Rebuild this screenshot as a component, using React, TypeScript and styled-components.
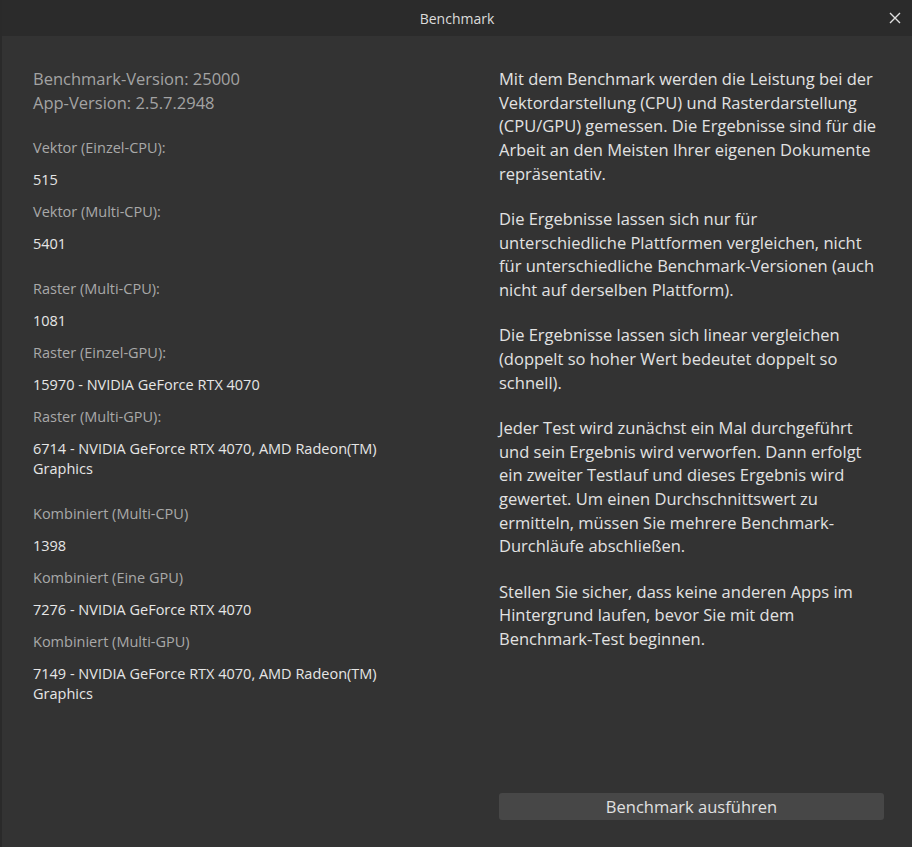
import React from 'react';
import styled, { createGlobalStyle } from 'styled-components';

const GlobalStyle = createGlobalStyle`
  html, body {
    margin: 0;
    padding: 0;
    background: #333333;
  }
  * {
    box-sizing: border-box;
  }
`;

const Window = styled.div`
  width: 912px;
  height: 847px;
  display: flex;
  flex-direction: column;
  background: #333333;
  border-left: 2px solid #2a2a2a;
  font-family: 'Open Sans', 'Noto Sans', sans-serif;
  color: #e2e2e2;
  overflow: hidden;
`;

const TitleBar = styled.div`
  height: 36px;
  flex: none;
  display: flex;
  align-items: center;
  justify-content: center;
  position: relative;
  background: #2b2b2b;
  font-size: 14px;
  color: #dcdcdc;
`;

const CloseButton = styled.button`
  position: absolute;
  right: 8px;
  top: 9px;
  width: 18px;
  height: 18px;
  padding: 0;
  border: none;
  background: transparent;
  display: flex;
  align-items: center;
  justify-content: center;
  cursor: pointer;
`;

const Body = styled.div`
  flex: 1;
  display: flex;
  padding: 31px 28px 27px 31px;
`;

const LeftColumn = styled.div`
  width: 380px;
  flex: none;
  display: flex;
  flex-direction: column;
`;

const RightColumn = styled.div`
  flex: 1;
  margin-left: 86px;
  display: flex;
  flex-direction: column;
`;

const VersionBlock = styled.div`
  font-size: 16.5px;
  line-height: 23.5px;
  color: #a3a3a3;
  margin-bottom: 24px;
`;

const Group = styled.div<{ $last?: boolean }>`
  display: flex;
  flex-direction: column;
  gap: 12px;
  margin-bottom: ${(p) => (p.$last ? 0 : 25)}px;
`;

const Label = styled.div`
  font-size: 14.5px;
  line-height: 20px;
  color: #a9a9a9;
`;

const Value = styled.div`
  font-size: 14.5px;
  line-height: 20px;
  color: #e6e6e6;
`;

const Paragraph = styled.p`
  margin: 0 0 21.5px 0;
  font-size: 16.5px;
  line-height: 23.7px;
  color: #e2e2e2;
`;

const RunButton = styled.button`
  margin-top: auto;
  height: 27px;
  width: 100%;
  border: none;
  border-radius: 3px;
  background: #474747;
  color: #e0e0e0;
  font-family: inherit;
  font-size: 16.5px;
  cursor: pointer;
`;

type Result = { label: string; value: string };

const groups: Result[][] = [
  [
    { label: 'Vektor (Einzel-CPU):', value: '515' },
    { label: 'Vektor (Multi-CPU):', value: '5401' },
  ],
  [
    { label: 'Raster (Multi-CPU):', value: '1081' },
    { label: 'Raster (Einzel-GPU):', value: '15970 - NVIDIA GeForce RTX 4070' },
    { label: 'Raster (Multi-GPU):', value: '6714 - NVIDIA GeForce RTX 4070, AMD Radeon(TM) Graphics' },
  ],
  [
    { label: 'Kombiniert (Multi-CPU)', value: '1398' },
    { label: 'Kombiniert (Eine GPU)', value: '7276 - NVIDIA GeForce RTX 4070' },
    { label: 'Kombiniert (Multi-GPU)', value: '7149 - NVIDIA GeForce RTX 4070, AMD Radeon(TM) Graphics' },
  ],
];

const paragraphs = [
  'Mit dem Benchmark werden die Leistung bei der Vektordarstellung (CPU) und Rasterdarstellung (CPU/GPU) gemessen. Die Ergebnisse sind für die Arbeit an den Meisten Ihrer eigenen Dokumente repräsentativ.',
  'Die Ergebnisse lassen sich nur für unterschiedliche Plattformen vergleichen, nicht für unterschiedliche Benchmark-Versionen (auch nicht auf derselben Plattform).',
  'Die Ergebnisse lassen sich linear vergleichen (doppelt so hoher Wert bedeutet doppelt so schnell).',
  'Jeder Test wird zunächst ein Mal durchgeführt und sein Ergebnis wird verworfen. Dann erfolgt ein zweiter Testlauf und dieses Ergebnis wird gewertet. Um einen Durchschnittswert zu ermitteln, müssen Sie mehrere Benchmark-Durchläufe abschließen.',
  'Stellen Sie sicher, dass keine anderen Apps im Hintergrund laufen, bevor Sie mit dem Benchmark-Test beginnen.',
];

export default function App() {
  return (
    <>
      <GlobalStyle />
      <Window>
        <TitleBar>
          Benchmark
          <CloseButton aria-label="Schließen">
            <svg width="12" height="12" viewBox="0 0 12 12">
              <path d="M1 1 L11 11 M11 1 L1 11" stroke="#e0e0e0" strokeWidth="1.4" fill="none" />
            </svg>
          </CloseButton>
        </TitleBar>
        <Body>
          <LeftColumn>
            <VersionBlock>
              <div>Benchmark-Version: 25000</div>
              <div>App-Version: 2.5.7.2948</div>
            </VersionBlock>
            {groups.map((g, gi) => (
              <Group key={gi} $last={gi === groups.length - 1}>
                {g.map((r) => (
                  <React.Fragment key={r.label}>
                    <Label>{r.label}</Label>
                    <Value>{r.value}</Value>
                  </React.Fragment>
                ))}
              </Group>
            ))}
          </LeftColumn>
          <RightColumn>
            {paragraphs.map((t, i) => (
              <Paragraph key={i}>{t}</Paragraph>
            ))}
            <RunButton>Benchmark ausführen</RunButton>
          </RightColumn>
        </Body>
      </Window>
    </>
  );
}
